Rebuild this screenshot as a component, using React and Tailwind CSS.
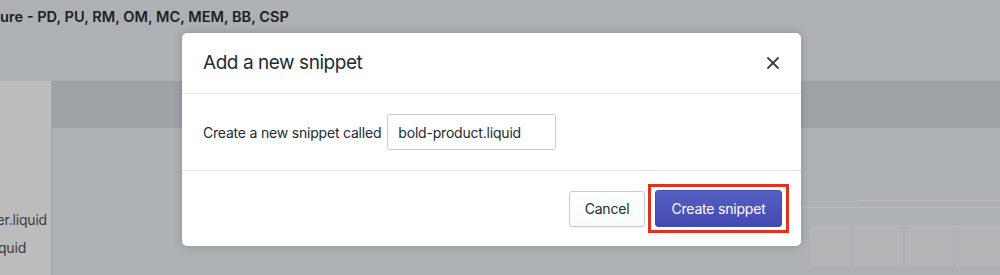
import { X } from 'lucide-react';

const font = { fontFamily: 'Inter, "Liberation Sans", sans-serif' };

const BackgroundPage = () => (
  <div className="flex h-full flex-col bg-[#aeb1b4]">
    <div className="h-[81px] shrink-0">
      <p className="pt-[7px] text-[14.6px] font-semibold leading-5 text-[#1e2023]">ure - PD, PU, RM, OM, MC, MEM, BB, CSP</p>
    </div>
    <div className="flex flex-1">
      <div className="flex w-[52px] shrink-0 flex-col items-end border-r border-[#a3a5a8] bg-[#bcbcbc] pt-[125px] text-[14px] leading-7 tracking-[-0.2px] text-[#3b3d40]">
        <span className="mr-[4px] whitespace-nowrap">er.liquid</span>
        <span className="mr-[25px] whitespace-nowrap">quid</span>
      </div>
      <div className="flex flex-1 flex-col">
        <div className="h-[47px] bg-[#9ea1a5]" />
        <div className="flex flex-1 flex-col items-end pt-[72px]">
          <div className="h-px w-[142px] bg-[#bdbdbf]" />
          <div className="mt-[6px] h-px w-[198px] bg-[#bdbdbf]" />
          <div className="mt-[17px] flex w-[198px] gap-[1px] pl-[8px]">
            <div className="grid flex-1 grid-cols-[41px_50px_48px_1fr] gap-[2px]">
              <div className="h-[42px] bg-[#b4b5b7]" />
              <div className="h-[42px] bg-[#b4b5b7]" />
              <div className="h-[42px] bg-[#b4b5b7]" />
              <div className="h-[42px] bg-[#b4b5b7]" />
            </div>
          </div>
        </div>
      </div>
    </div>
  </div>
);

const SnippetModal = () => (
  <div className="absolute left-[182px] top-[33px] w-[619px] rounded-[5px] bg-white shadow-[0_0_8px_rgba(0,0,0,0.18)]">
    <div className="flex h-[61px] items-center justify-between border-b border-[#dfe3e8] pl-[21px] pr-[18px]">
      <h2 className="text-[19px] leading-6 tracking-[-0.45px] text-[#212b36]">Add a new snippet</h2>
      <X size={20} strokeWidth={2.2} className="text-[#3a3f44]" />
    </div>
    <div className="flex h-[77px] items-center gap-[6px] border-b border-[#dfe3e8] px-[21px] text-[14px] tracking-[-0.2px] text-[#212b36]">
      <span>Create a new snippet called</span>
      <div className="flex h-[36px] w-[169px] items-center rounded-[3px] border border-[#c4cdd5] px-[10px]">
        bold-product.liquid
      </div>
    </div>
    <div className="flex h-[75px] items-center justify-end gap-[3px] pr-[12px] text-[14px] tracking-[-0.2px]">
      <button
        type="button"
        className="h-[36px] w-[76px] rounded-[3px] border border-[#c4cdd5] bg-gradient-to-b from-white to-[#f9fafb] text-[#212b36] shadow-[0_1px_0_rgba(22,29,37,0.05)]"
      >
        Cancel
      </button>
      <div className="border-[3px] border-[#e0321f] px-[4px] py-[3px]">
        <button
          type="button"
          className="h-[37px] w-[127px] rounded-[3px] border border-[#3f4eae] bg-gradient-to-b from-[#5560c2] to-[#4549b2] text-white"
        >
          Create snippet
        </button>
      </div>
    </div>
  </div>
);

export default function App() {
  return (
    <div className="relative h-[275px] w-[1000px] overflow-hidden" style={font}>
      <BackgroundPage />
      <SnippetModal />
    </div>
  );
}
